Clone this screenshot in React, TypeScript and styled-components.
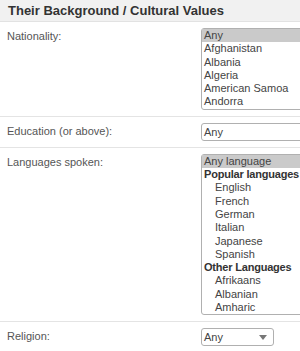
import styled, { createGlobalStyle } from "styled-components"

const Global = createGlobalStyle`
    body {
        margin: 0;
        background: #fff;
        font-family: "Liberation Sans", Arial, sans-serif;
    }
`
const Panel = styled.section`
    width: 300px;
    overflow: hidden;
`
const Header = styled.h2`
    margin: 0;
    height: 21px;
    line-height: 21px;
    padding: 0 8px;
    font-size: 13px;
    font-weight: bold;
    color: #333;
    background: #f1f1f1;
    border-bottom: 1px solid #e2e2e2;
`
const Row = styled.div`
    display: flex;
    padding: 6px 0 6px 7px;
    border-bottom: 1px solid #e4e4e4;
`
const Label = styled.label`
    width: 194px;
    flex-shrink: 0;
    padding-top: 2px;
    font-size: 11px;
    color: #555;
`
const ListBox = styled.div`
    width: 110px;
    flex-shrink: 0;
    border: 1px solid #b0b0b0;
    border-radius: 3px;
    background: #fff;
    font-size: 11px;
    color: #444;
`
const Option = styled.div<{ $selected?: boolean; $indent?: boolean; $group?: boolean }>`
    height: 13.3px;
    line-height: 13px;
    padding-left: ${p => (p.$indent ? 13 : 2)}px;
    white-space: nowrap;
    background: ${p => (p.$selected ? "#cacaca" : "transparent")};
    font-weight: ${p => (p.$group ? "bold" : "normal")};
    letter-spacing: ${p => (p.$group ? "-0.2px" : "normal")};
    color: ${p => (p.$group ? "#333" : "#444")};
`
const Select = styled.div<{ $width: number }>`
    position: relative;
    width: ${p => p.$width}px;
    flex-shrink: 0;
    height: 16px;
    line-height: 16px;
    border: 1px solid #b0b0b0;
    border-radius: 3px;
    padding-left: 2px;
    font-size: 11px;
    color: #444;
    background: #fff;
`
const Arrow = styled.span`
    position: absolute;
    right: 6px;
    top: 6px;
    width: 0;
    height: 0;
    border-left: 4px solid transparent;
    border-right: 4px solid transparent;
    border-top: 5px solid #777;
`

const countries = ["Any", "Afghanistan", "Albania", "Algeria", "American Samoa", "Andorra"]

type Lang = { text: string; group?: boolean; indent?: boolean; selected?: boolean }
const languages: Lang[] = [
    { text: "Any language", selected: true },
    { text: "Popular languages", group: true },
    { text: "English", indent: true },
    { text: "French", indent: true },
    { text: "German", indent: true },
    { text: "Italian", indent: true },
    { text: "Japanese", indent: true },
    { text: "Spanish", indent: true },
    { text: "Other Languages", group: true },
    { text: "Afrikaans", indent: true },
    { text: "Albanian", indent: true },
    { text: "Amharic", indent: true },
]

export default function App() {
    return (
        <Panel>
            <Global />
            <Header>Their Background / Cultural Values</Header>
            <Row>
                <Label>Nationality:</Label>
                <ListBox>
                    {countries.map((c, i) => (
                        <Option key={c} $selected={i === 0}>{c}</Option>
                    ))}
                </ListBox>
            </Row>
            <Row>
                <Label>Education (or above):</Label>
                <Select $width={110}>Any</Select>
            </Row>
            <Row>
                <Label>Languages spoken:</Label>
                <ListBox>
                    {languages.map(l => (
                        <Option key={l.text} $selected={l.selected} $group={l.group} $indent={l.indent}>
                            {l.text}
                        </Option>
                    ))}
                </ListBox>
            </Row>
            <Row>
                <Label>Religion:</Label>
                <Select $width={69}>
                    Any
                    <Arrow />
                </Select>
            </Row>
        </Panel>
    )
}
